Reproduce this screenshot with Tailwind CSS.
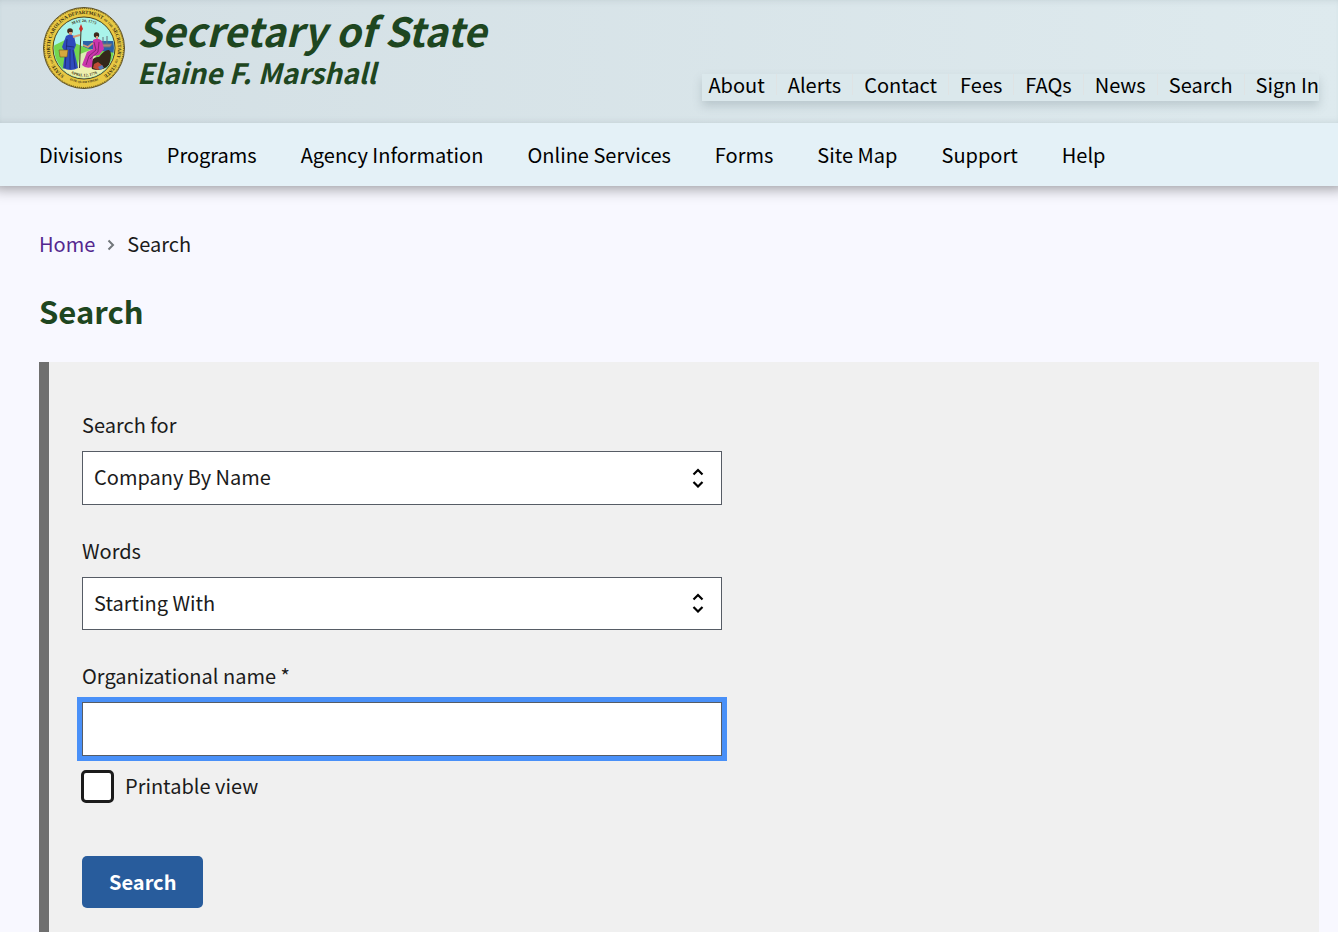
<!DOCTYPE html>
<html lang="en">
<head>
<meta charset="utf-8">
<meta name="viewport" content="width=device-width, initial-scale=1">
<title>Search - Secretary of State</title>
<script src="https://cdn.jsdelivr.net/npm/@tailwindcss/browser@4"></script>
</head>
<body class="flex min-h-screen flex-col bg-[#f8f8ff] font-['Noto_Sans_CJK_SC','Noto_Sans',sans-serif] text-[20px] leading-7 text-[#1b1b1b]">

<header class="relative shadow-[0_-6px_14px_8px_rgba(0,0,0,0.42)]">
  <div class="flex items-start justify-between bg-linear-to-r from-[#d3dfe4] to-[#deeaee] pr-[19px] pb-[22px] pl-[43px] shadow-[inset_0_5px_10px_-8px_rgba(80,100,110,0.35),inset_0_-5px_10px_-8px_rgba(80,100,110,0.35)]">
    <a href="#" class="flex items-start text-[#1e4620]">
      <svg class="mt-[7px] size-[82px] shrink-0" viewBox="0 0 82 82" role="img" aria-label="Department of the Secretary of State seal">
        <defs>
          <path id="ring" d="M41 75 A34 34 0 0 1 41 7 A34 34 0 0 1 41 75"/>
          <path id="ringBottom" d="M22 70.500 A35.500 35.500 0 0 0 60 70.500"/>
          <path id="innerTop" d="M24 21 A27 27 0 0 1 58 21"/>
          <path id="innerBottom" d="M24 64 A29 29 0 0 0 58 64"/>
          <clipPath id="scene"><circle cx="41" cy="41" r="30"/></clipPath>
        </defs>
        <circle cx="41" cy="41" r="40.500" fill="#e8c843" stroke="#5c512a" stroke-width="1"/>
        <circle cx="41" cy="41" r="39.500" fill="none" stroke="#5a4b1a" stroke-width="1" stroke-dasharray="1 1"/>
        <circle cx="41" cy="41" r="31" fill="#a9f3ea" stroke="#4d431c" stroke-width="1"/>
        <g clip-path="url(#scene)">
          <path d="M40 34H72V46H40z" fill="#2c62a8"/>
          <path d="M10 39 22 33 34 37 46 42 72 46V72H10z" fill="#74d650"/>
          <path d="M37 47 50 42 56 58 40 66 34 62z" fill="#dcecb4"/>
          <path d="M10 63Q41 58 72 62V75H10z" fill="#eef0ae"/>
          <path d="M60 30v7M64 29v8M57 37h12l-2 3h-8z" stroke="#66717a" stroke-width="1" fill="#ad8874"/>
          <path d="M48 58Q49 49 56 50Q62 42 66 43Q70 45 66 58Q59 65 49 62z" fill="#33281a"/>
          <path d="M51 57l4-2 5 4-5 4-5-2z" fill="#bf4a35"/>
          <path d="M55 60l4-2 2 3-4 2z" fill="#547cb8"/>
          <circle cx="27" cy="24" r="2.800" fill="#40291b"/>
          <path d="M26 25h3v4h-3z" fill="#d99a74"/>
          <path d="M23 29Q27 26 31 29L33 38 31 43 35 61Q28 65 20 61L22 45 19 40z" fill="#2f4bbd"/>
          <path d="M24 32 22 61M27 42 27 62M30 43 32 61M23 39 31 40" stroke="#1d2b70" stroke-width=".8" fill="none"/>
          <path d="M30 30 37 28" stroke="#d99a74" stroke-width="2"/>
          <path d="M16 43h9l-1 7h-7z" fill="#d7a83d" stroke="#70561e" stroke-width=".6"/>
          <path d="M38 23 36.500 61" stroke="#443321" stroke-width="1"/>
          <path d="M36 22 38 17 40 22 38 25z" fill="#c92f2c"/>
          <circle cx="53.500" cy="28" r="2.700" fill="#40291b"/>
          <path d="M53 29h2v4h-2z" fill="#d99a74"/>
          <path d="M50 33Q55 30 59 34L61 42 56 48 50 49 49 60Q43 62 39 58L44 45 50 42z" fill="#cb36ac"/>
          <path d="M51 35 53 43 46 49 43 58M56 35 55 45 47 52" fill="none" stroke="#722162" stroke-width=".8"/>
          <path d="M50 36 45 40 40 38" stroke="#d99a74" stroke-width="1.700" fill="none"/>
        </g>
        <g fill="#3a3010" font-family="Liberation Serif, serif" font-weight="700">
          <text font-size="5"><textPath href="#ring" startOffset="50%" text-anchor="middle">STATE <tspan font-size="3">OF</tspan> NORTH CAROLINA DEPARTMENT <tspan font-size="3">OF THE</tspan> SECRETARY <tspan font-size="3">OF</tspan> STATE</textPath></text>
          <text font-size="3"><textPath href="#ringBottom" startOffset="50%" text-anchor="middle">ESSE QUAM VIDERI</textPath></text>
          <text font-size="4"><textPath href="#innerTop" startOffset="50%" text-anchor="middle">MAY 20, 1775</textPath></text>
          <text font-size="4"><textPath href="#innerBottom" startOffset="50%" text-anchor="middle">APRIL 12, 1776</textPath></text>
        </g>
      </svg>
      <span class="ml-3 flex flex-col font-bold italic">
        <span class="pt-[6px] text-[40px] leading-[48px]">Secretary of State</span>
        <span class="text-[28px] leading-9">Elaine F. Marshall</span>
      </span>
    </a>
    <nav aria-label="Utility" class="mt-[74px]">
      <ul class="flex h-[27px] items-start bg-[#dbe8ec] pl-[6px] whitespace-nowrap text-black shadow-[0_5px_10px_rgba(90,110,120,0.25)]">
        <li class="flex h-[21px] items-center pr-[11px]"><a href="#" class="leading-6">About</a></li>
        <li class="flex h-[21px] items-center border-l border-[#dfe3e4] px-[11px]"><a href="#" class="leading-6">Alerts</a></li>
        <li class="flex h-[21px] items-center border-l border-[#dfe3e4] px-[11px]"><a href="#" class="leading-6">Contact</a></li>
        <li class="flex h-[21px] items-center border-l border-[#dfe3e4] px-[11px]"><a href="#" class="leading-6">Fees</a></li>
        <li class="flex h-[21px] items-center border-l border-[#dfe3e4] px-[11px]"><a href="#" class="leading-6">FAQs</a></li>
        <li class="flex h-[21px] items-center border-l border-[#dfe3e4] px-[11px]"><a href="#" class="leading-6">News</a></li>
        <li class="flex h-[21px] items-center border-l border-[#dfe3e4] px-[11px]"><a href="#" class="leading-6">Search</a></li>
        <li class="flex h-[21px] items-center border-l border-[#dfe3e4] pl-[11px]"><a href="#" class="leading-6">Sign In</a></li>
      </ul>
    </nav>
  </div>
  <nav aria-label="Primary" class="bg-[#e4f1f7] px-[39px] pt-[18px] pb-[17px]">
    <ul class="flex gap-11 whitespace-nowrap text-black">
      <li><a href="#">Divisions</a></li>
      <li><a href="#">Programs</a></li>
      <li><a href="#">Agency Information</a></li>
      <li><a href="#">Online Services</a></li>
      <li><a href="#">Forms</a></li>
      <li><a href="#">Site Map</a></li>
      <li><a href="#">Support</a></li>
      <li><a href="#">Help</a></li>
    </ul>
  </nav>
</header>

<main class="flex grow flex-col pr-[19px] pl-[39px]">
  <nav aria-label="Breadcrumb" class="mt-11">
    <ol class="flex items-center">
      <li><a href="#" class="text-[#54278f]">Home</a></li>
      <li aria-hidden="true" class="mx-3 pt-px"><svg class="h-3 w-2" viewBox="0 0 8 12" fill="none" stroke="#71767a" stroke-width="2"><path d="M1.500 1.500 6 6 1.500 10.500"/></svg></li>
      <li aria-current="page">Search</li>
    </ol>
  </nav>
  <h1 class="mt-[31px] text-[31px] leading-[44px] font-bold text-[#1e4620]">Search</h1>

  <form class="mt-[29px] flex grow flex-col items-start border-l-10 border-[#6f6f6f] bg-[#f0f0f0] px-[33px] pt-[49px] pb-6">
    <label for="kind">Search for</label>
    <div class="relative mt-3 w-full max-w-[640px]">
      <select id="kind" class="h-[54px] w-full appearance-none border border-[#565c65] bg-white px-[11px] pb-[2px]">
        <option>Company By Name</option>
      </select>
      <svg class="pointer-events-none absolute top-[17px] right-[18px] h-5 w-3" viewBox="0 0 12 20" fill="none" stroke="#000" stroke-width="2.200"><path d="M1.500 6.500 6 2 10.500 6.500M1.500 14 6 18.500 10.500 14"/></svg>
    </div>

    <label for="words" class="mt-8">Words</label>
    <div class="relative mt-3 w-full max-w-[640px]">
      <select id="words" class="h-[53px] w-full appearance-none border border-[#565c65] bg-white px-[11px] pb-[2px]">
        <option>Starting With</option>
      </select>
      <svg class="pointer-events-none absolute top-[16px] right-[18px] h-5 w-3" viewBox="0 0 12 20" fill="none" stroke="#000" stroke-width="2.200"><path d="M1.500 6.500 6 2 10.500 6.500M1.500 14 6 18.500 10.500 14"/></svg>
    </div>

    <label for="org" class="mt-8">Organizational name *</label>
    <input id="org" type="text" required class="mt-3 h-[54px] w-full max-w-[640px] border border-[#565c65] bg-white px-[11px] outline-5 outline-[#4990f8]">

    <div class="mt-[14px] flex items-center gap-[11px]">
      <input id="printable" type="checkbox" class="-ml-px size-[33px] appearance-none rounded-[5px] border-[3px] border-[#1b1b1b] bg-white">
      <label for="printable" class="pb-[2px]">Printable view</label>
    </div>

    <button type="submit" class="mt-[53px] h-[52px] rounded-[5px] bg-[#285c9c] px-[27px] font-bold text-white">Search</button>
  </form>
</main>
</body>
</html>
